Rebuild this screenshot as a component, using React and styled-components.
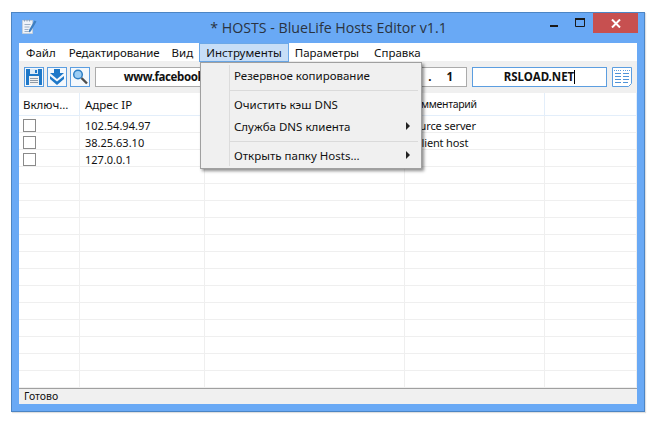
import React from 'react';
import styled, { createGlobalStyle } from 'styled-components';

const GlobalStyle = createGlobalStyle`
  html, body {
    margin: 0;
    padding: 0;
    background: #fff;
  }
  body {
    font-family: "Noto Sans", "Open Sans", sans-serif;
    font-size: 11px;
    color: #111;
  }
`;

const Page = styled.div`
  width: 659px;
  height: 423px;
  padding: 12px 14px 11px 11px;
  box-sizing: border-box;
`;

const Window = styled.div`
  position: relative;
  height: 400px;
  box-sizing: border-box;
  background: #69a9f5;
  border: 1px solid #4c85c4;
  box-shadow: 1px 1px 1px rgba(0, 0, 0, 0.12);
  padding: 0 7px 7px 7px;
  display: flex;
  flex-direction: column;
`;

const TitleBar = styled.div`
  height: 30px;
  flex: none;
  position: relative;
  display: flex;
  align-items: center;
  justify-content: center;
`;

const AppIcon = styled.svg`
  position: absolute;
  left: 3px;
  top: 6px;
`;

const Title = styled.div`
  font-family: "Open Sans", "Noto Sans", sans-serif;
  font-size: 14.2px;
  color: #2a3340;
  margin-top: -2px;
  margin-left: 1px;
`;

const Controls = styled.div`
  position: absolute;
  right: -1px;
  top: 0;
  display: flex;
`;

const ControlButton = styled.div`
  width: ${({ $wide }) => ($wide ? '45px' : '26px')};
  height: 20px;
  display: flex;
  align-items: center;
  justify-content: center;
  background: ${({ $close }) => ($close ? '#c75050' : 'transparent')};
`;

const Client = styled.div`
  flex: 1;
  background: #fff;
  display: flex;
  flex-direction: column;
  min-height: 0;
`;

const MenuBar = styled.div`
  height: 18px;
  flex: none;
  background: #fff;
  display: flex;
  align-items: stretch;
  padding-left: 1px;
`;

const MenuItem = styled.div`
  padding: 0 6px;
  margin-left: ${({ $shift }) => $shift || 0}px;
  line-height: 19px;
  height: 19px;
  box-sizing: border-box;
  font-size: 11.5px;
  letter-spacing: ${({ $tight }) => ($tight ? '-0.1px' : '0')};
  position: relative;
  white-space: nowrap;
  ${({ $active }) =>
    $active &&
    `
    background: #c7def7;
    border: 1px solid #6ba8e8;
    line-height: 17px;
  `}
`;

const ToolBar = styled.div`
  height: 31px;
  flex: none;
  box-sizing: border-box;
  background: #f0f0f0;
  display: flex;
  align-items: center;
  padding: 0 5px;
  gap: 3px;
`;

const ToolButton = styled.div`
  width: 20px;
  height: 20px;
  flex: none;
  box-sizing: border-box;
  border: 1px solid #5c9ee0;
  background: #f4f8fc;
  display: flex;
  align-items: center;
  justify-content: center;
  overflow: hidden;
`;

const PlainButton = styled(ToolButton)`
  border: none;
  background: transparent;
  margin-left: 2px;
`;

const Field = styled.div`
  width: ${({ $w }) => $w}px;
  margin-left: ${({ $gap }) => $gap || 0}px;
  height: 20px;
  box-sizing: border-box;
  background: #fff;
  border: 1px solid ${({ $focus }) => ($focus ? '#5c9ee0' : '#ababab')};
  font-weight: 700;
  font-size: 11.5px;
  letter-spacing: ${({ $tight }) => ($tight ? '-0.4px' : '0')};
  line-height: 18px;
  text-align: center;
  white-space: pre;
  overflow: hidden;
  flex: none;
`;

const IpField = styled(Field)`
  text-align: right;
  padding-right: 13px;
`;

const Caret = styled.span`
  display: inline-block;
  width: 1px;
  height: 14px;
  background: #000;
  vertical-align: -3px;
`;

const Grid = styled.div`
  flex: 1;
  min-height: 0;
  display: flex;
  flex-direction: column;
  background: #fff;
`;

const columns = '61px 125px 200px 140px 92px';

const HeaderRow = styled.div`
  height: 24px;
  flex: none;
  display: grid;
  grid-template-columns: ${columns};
  box-sizing: border-box;
  border-top: 1px solid #f0f0f0;
  border-bottom: 1px solid #e3eefa;
`;

const HeaderCell = styled.div`
  padding-left: ${({ $pad }) => $pad || 5}px;
  line-height: 23px;
  font-size: ${({ $small }) => ($small ? '10.5px' : '11.5px')};
  letter-spacing: ${({ $small }) => ($small ? '-0.3px' : '0')};
  border-right: 1px solid #e3eefa;
  white-space: nowrap;
  overflow: hidden;
`;

const Row = styled.div`
  height: 17px;
  flex: none;
  box-sizing: border-box;
  display: grid;
  grid-template-columns: ${columns};
  border-bottom: 1px solid #efefef;
`;

const Cell = styled.div`
  padding-left: ${({ $note }) => ($note ? 3 : 5)}px;
  letter-spacing: ${({ $note }) => ($note ? '-0.15px' : '0')};
  line-height: 19px;
  font-size: 11px;
  border-right: 1px solid #efefef;
  white-space: nowrap;
  overflow: hidden;
`;

const Check = styled.span`
  display: block;
  width: 13px;
  height: 13px;
  box-sizing: border-box;
  border: 1px solid #8a8a8a;
  background: #fff;
  margin: 3px 0 0 -1px;
`;

const StatusBar = styled.div`
  height: 16px;
  flex: none;
  box-sizing: border-box;
  background: #f0f0f0;
  border-top: 1px solid #a0a0a0;
  padding-left: 5px;
  line-height: 15px;
  font-size: 10.5px;
`;

const Dropdown = styled.div`
  position: absolute;
  left: 188px;
  top: 49px;
  width: 222px;
  height: 107px;
  box-sizing: border-box;
  background: #f0f0f0;
  border: 1px solid #a0a0a0;
  box-shadow: 2px 2px 3px rgba(0, 0, 0, 0.45);
  padding: 2px;
  display: flex;
  flex-direction: column;
  z-index: 5;
`;

const Gutter = styled.div`
  position: absolute;
  left: 28px;
  top: 2px;
  bottom: 2px;
  width: 1px;
  background: #dcdcdc;
`;

const DropItem = styled.div`
  height: 22px;
  flex: none;
  box-sizing: border-box;
  padding: 0 0 2px 31px;
  display: flex;
  align-items: center;
  justify-content: space-between;
  font-size: 11.5px;
  position: relative;
`;

const Arrow = styled.span`
  width: 0;
  height: 0;
  border-top: 4px solid transparent;
  border-bottom: 4px solid transparent;
  border-left: 4px solid #222;
  margin-right: 9px;
`;

const Separator = styled.div`
  height: 1px;
  flex: none;
  background: #dadada;
  margin: 3px 1px 3px 27px;
`;

const NoteIcon = () => (
  <AppIcon width="16" height="16" viewBox="0 0 16 16">
    <path d="M.5 1.5h10v13H.5z" fill="#eef3f9" stroke="#c3cfdd" />
    <path d="M2.5 .5v2M5 .5v2M7.5 .5v2" stroke="#8fa4bd" />
    <path d="M2.5 5.5h6M2.5 8h5M2.5 10.5h4M2.5 12.5h6" stroke="#9db0c6" />
    <path d="M7 11l5.5-9.5 2 1L9 12l-2 1.5z" fill="#3f7fc0" />
  </AppIcon>
);

const SaveIcon = () => (
  <svg width="18" height="18" viewBox="0 0 18 18">
    <path d="M1 1h16v16H1z" fill="#1e78c8" />
    <path d="M5 1h8v5H5z" fill="#dceaf7" />
    <path d="M10 2h2v3h-2z" fill="#1e78c8" />
    <path d="M4 8h10v9H4z" fill="#f2f2f2" />
    <path d="M5 10.500h8M5 12.500h8M5 14.500h8" stroke="#8f9aa6" />
  </svg>
);

const LoadIcon = () => (
  <svg width="18" height="18" viewBox="0 0 18 18">
    <path d="M6 1h6v4h4l-7 6-7-6h4z" fill="#1e78c8" />
    <path d="M2 8l7 5.500L16 8v3l-7 6-7-6z" fill="#1e78c8" />
  </svg>
);

const SearchIcon = () => (
  <svg width="18" height="18" viewBox="0 0 18 18">
    <circle cx="7" cy="6.500" r="4.300" fill="#9ccdf4" stroke="#2f7fc4" strokeWidth="1.500" />
    <path d="M10.500 10L16 15.500" stroke="#4e4e4e" strokeWidth="2.400" />
  </svg>
);

const SheetIcon = () => (
  <svg width="20" height="20" viewBox="0 0 20 20">
    <path d="M.5 .5h19v16l-3 3H.5z" fill="#fff" stroke="#5c9ee0" />
    <path d="M2 3.500h7M11 3.500h7" stroke="#5c9ee0" strokeDasharray="1 1" />
    <path d="M3 6.500h6M11 6.500h6M3 9.500h6M11 9.500h6M3 12.500h6M11 12.500h6M3 15.500h6M11 15.500h5" stroke="#4f93d8" />
  </svg>
);

const rows = [
  ['102.54.94.97', 'source server'],
  ['38.25.63.10', 'x client host'],
  ['127.0.0.1', ''],
];

const App = () => {
  const emptyRows = Array.from({ length: 13 });

  return (
    <Page>
      <GlobalStyle />
      <Window>
        <TitleBar>
          <NoteIcon />
          <Title>* HOSTS - BlueLife Hosts Editor v1.1</Title>
          <Controls>
            <ControlButton>
              <svg width="10" height="10" viewBox="0 0 10 10">
                <path d="M1 7h8v2H1z" fill="#1a1a1a" />
              </svg>
            </ControlButton>
            <ControlButton>
              <svg width="11" height="10" viewBox="0 0 11 10">
                <path d="M.5 .5h9v8h-9z" fill="none" stroke="#1a1a1a" />
                <path d="M0 0h10v2H0z" fill="#1a1a1a" />
              </svg>
            </ControlButton>
            <ControlButton $wide $close>
              <svg width="10" height="9" viewBox="0 0 10 9">
                <path d="M1 .5l8 8M9 .5l-8 8" stroke="#fff" strokeWidth="2" />
              </svg>
            </ControlButton>
          </Controls>
        </TitleBar>
        <Client>
          <MenuBar>
            <MenuItem>Файл</MenuItem>
            <MenuItem $shift={1} $tight>Редактирование</MenuItem>
            <MenuItem>Вид</MenuItem>
            <MenuItem $active>Инструменты</MenuItem>
            <MenuItem>Параметры</MenuItem>
            <MenuItem $shift={3}>Справка</MenuItem>
          </MenuBar>
          <ToolBar>
            <ToolButton><SaveIcon /></ToolButton>
            <ToolButton><LoadIcon /></ToolButton>
            <ToolButton><SearchIcon /></ToolButton>
            <Field $w={164} $gap={2} $tight>www.facebook.com</Field>
            <IpField $w={205}>{'.     1'}</IpField>
            <Field $w={135} $gap={2} $focus>RSLOAD.NET<Caret /></Field>
            <PlainButton><SheetIcon /></PlainButton>
          </ToolBar>
          <Grid>
            <HeaderRow>
              <HeaderCell $pad={4}>Включ…</HeaderCell>
              <HeaderCell>Адрес IP</HeaderCell>
              <HeaderCell />
              <HeaderCell $small $pad={4}>Комментарий</HeaderCell>
              <HeaderCell />
            </HeaderRow>
            {rows.map(([ip, note]) => (
              <Row key={ip}>
                <Cell><Check /></Cell>
                <Cell>{ip}</Cell>
                <Cell />
                <Cell $note>{note}</Cell>
                <Cell />
              </Row>
            ))}
            {emptyRows.map((_, i) => (
              <Row key={i}>
                <Cell /><Cell /><Cell /><Cell /><Cell />
              </Row>
            ))}
          </Grid>
          <StatusBar>Готово</StatusBar>
        </Client>
        <Dropdown>
          <Gutter />
          <DropItem>Резервное копирование</DropItem>
          <Separator />
          <DropItem>Очистить кэш DNS</DropItem>
          <DropItem>Служба DNS клиента<Arrow /></DropItem>
          <Separator />
          <DropItem>Открыть папку Hosts...<Arrow /></DropItem>
        </Dropdown>
      </Window>
    </Page>
  );
};

export default App;
